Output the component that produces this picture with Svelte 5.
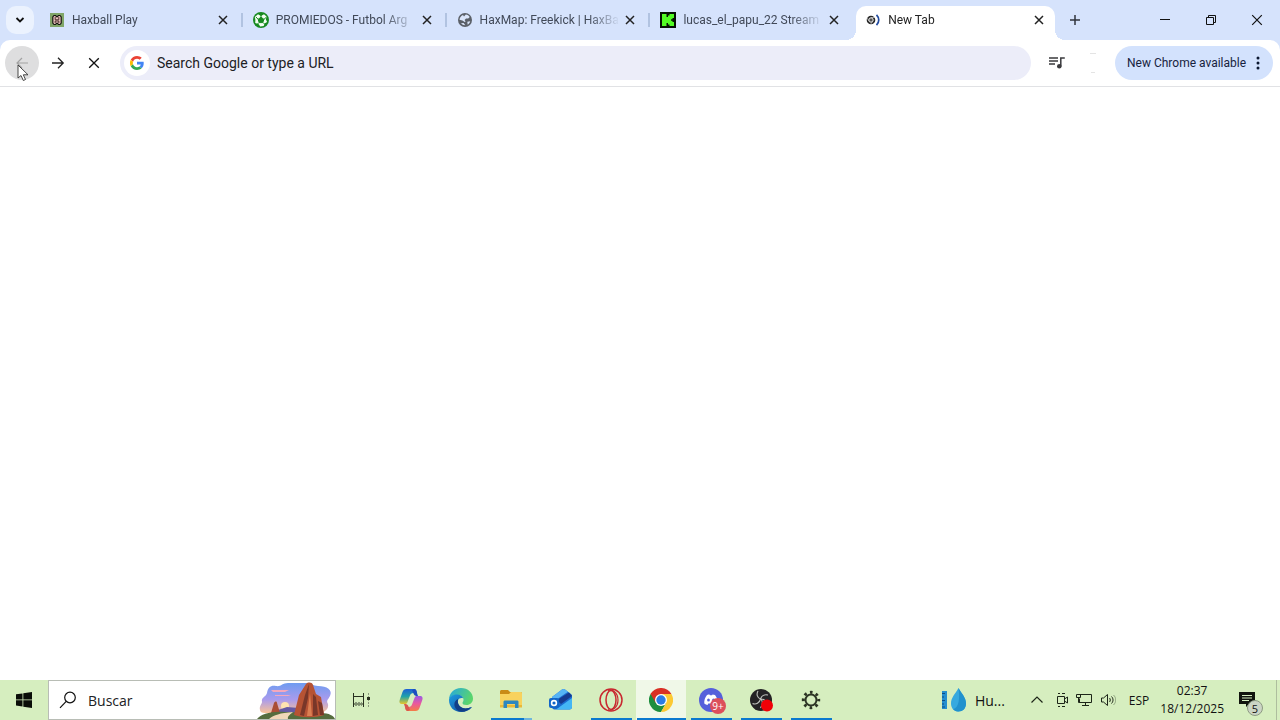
<script lang="ts">
    interface Tab {
        id: string;
        title: string;
    }

    const tabs: Tab[] = [
        { id: "haxball", title: "Haxball Play" },
        { id: "promiedos", title: "PROMIEDOS - Futbol Arg" },
        { id: "globe", title: "HaxMap: Freekick | HaxBa" },
        { id: "kick", title: "lucas_el_papu_22 Stream" },
        { id: "newtab", title: "New Tab" },
    ];

    const apps = [
        { id: "copilot", name: "Copilot", running: false },
        { id: "edge", name: "Microsoft Edge", running: false },
        { id: "files", name: "Explorador de archivos", running: true },
        { id: "outlook", name: "Outlook", running: false },
        { id: "opera", name: "Opera", running: true },
        { id: "chrome", name: "Google Chrome", running: true },
        { id: "discord", name: "Discord", running: true },
        { id: "obs", name: "OBS Studio", running: true },
        { id: "settings", name: "Configuración", running: true },
    ];

    let activeTab = $state("newtab");
    let activeApp = $state("chrome");
    let url = $state("");
    let search = $state("");
</script>

{#snippet cross(size: number, width: number)}
    <svg width={size} height={size} viewBox="0 0 10 10" fill="none" stroke="currentColor" stroke-width={width}>
        <path d="M1 1l8 8M9 1L1 9" />
    </svg>
{/snippet}

{#snippet favicon(id: string)}
    <svg class="favicon" viewBox="0 0 16 16">
        {#if id === "haxball"}
            <path d="M1 1h14v14H1z" fill="#7fa568" />
            <path d="M5 3.500h1.500L8 5l1.500-1.500H11l1.200 1.500v6L11 12.500H9.500L8 11l-1.500 1.500H5L3.800 11V5z" fill="#e9c3bd" stroke="#171512" stroke-width="1.200" />
            <path d="M6.200 5v2.800h3.600V5M6.200 11V9h3.600v2" fill="none" stroke="#3c2020" stroke-width=".9" />
        {:else if id === "promiedos"}
            <circle cx="8" cy="8" r="8" fill="#178a20" />
            <path d="M5 2.200L8 4l3-1.800 2.500 2.300-.6 3 1.200 2.500-2.600 1.500-.8 2.600-3.400.4L5.500 12 2.200 11l.2-3.200L1.800 5z" fill="#f4fff2" />
            <path d="M8 5.200l2.900 2.100-1.100 3.300H6.200L5.100 7.300zM3 5l2 2.200M8 2v3M13 5.500l-2 1.800M10 10.500l2 2M6 10.500l-2 2" fill="#178a20" stroke="#178a20" />
        {:else if id === "globe"}
            <circle cx="8" cy="8" r="7" fill="#5b6068" />
            <path d="M8.800 2.600c1.800.2 3 1 3.900 2.300l-1.500 1.700-2.200-.2-1.400 1.700 1 1.400-.9.600-2.300-1.500-2.900-.8c.2-2.200 1.500-4 3.500-4.800L7 4.600zM4 11.300l2.600-.3 1.700 2.300C6.300 13.300 5 12.600 4 11.300zM10.300 9.700l2.900-.4c-.4 1.700-1.300 2.700-2.500 3.400z" fill="#dbe6fb" />
        {:else if id === "kick"}
            <path d="M0 0h16v16H0z" fill="#061104" />
            <path d="M2 2h4.500v3H8V3.500h1.500V2H14v4h-1.500v1.200H11v1.600h1.500V10H14v4H9.500v-1.500H8V11H6.500v3H2z" fill="#52fb24" />
        {:else}
            <circle cx="6" cy="8" r="4.300" fill="#252525" />
            <circle cx="6" cy="8" r="2.200" fill="#555" stroke="#eee" />
            <path d="M6 5.500h4M4 9L2 6M7.500 9.500L5.800 12" stroke="#ddd" stroke-width=".6" />
            <path d="M11.500 2.800c3 3 3 7.400 0 10.400" fill="none" stroke="#214a9f" stroke-width="1.700" />
        {/if}
    </svg>
{/snippet}

{#snippet appIcon(id: string)}
    <svg width="24" height="24" viewBox="0 0 24 24">
        {#if id === "copilot"}
            <defs>
                <linearGradient id="cop-a" x1="0" y1="0" x2="0" y2="1">
                    <stop offset="0" stop-color="#1d5fd6" />
                    <stop offset=".5" stop-color="#1fa3a8" />
                    <stop offset="1" stop-color="#e9c52a" />
                </linearGradient>
                <linearGradient id="cop-b" x1="0" y1="0" x2="0" y2="1">
                    <stop offset="0" stop-color="#9a5ae4" />
                    <stop offset=".5" stop-color="#e9589e" />
                    <stop offset="1" stop-color="#f47c45" />
                </linearGradient>
            </defs>
            <path d="M7.500 1H15c2 0 2.500 1.500 3 4h-3.500c-2 0-3 1-3.500 2.500L8.500 14c-.5 1.500-1.200 2-2.500 2H3c-2.500 0-3-2-2.300-4L3.500 4c.7-2 1.800-3 4-3z" fill="url(#cop-a)" />
            <path d="M16.500 23H9c-2 0-2.500-1.500-3-4h3.500c2 0 3-1 3.500-2.500L15.500 10c.5-1.500 1.200-2 2.500-2h3c2.500 0 3 2 2.300 4l-2.800 8c-.7 2-1.800 3-4 3z" fill="url(#cop-b)" />
            <path d="M15 1c2 0 2.500 1.500 3 4l1 3h-1.500c-1.500 0-2.500-1-3-2.500L13 2z" fill="#1c4fc0" />
            <path d="M9 23c-2 0-2.500-1.500-3-4l-1-3h1.500c1.500 0 2.500 1 3 2.500L11 22z" fill="#d9574e" />
        {:else if id === "edge"}
            <defs>
                <linearGradient id="edge-a" x1="0" y1="0" x2="1" y2=".4">
                    <stop offset="0" stop-color="#25a7e2" />
                    <stop offset="1" stop-color="#5ad56c" />
                </linearGradient>
                <linearGradient id="edge-b" x1="0" y1="0" x2="1" y2="1">
                    <stop offset="0" stop-color="#1d9be0" />
                    <stop offset="1" stop-color="#114a9b" />
                </linearGradient>
            </defs>
            <path d="M0 12C0 5 5 0 12 0s12 5 12 10.500c0 4-3 6.500-6.500 6.500-3 0-4-1-4-2s1-1.500 1-3.300C14.500 9 12 7 8.500 7 4 7 0 9.500 0 12z" fill="url(#edge-a)" />
            <path d="M0 12c0-3 3.500-5.500 8-5.500 3 0 5.500 1.500 6.300 4-1.500-1-4.500-.5-5.300 2-1 4 3 8 7.500 8 2.500 0 4.500-.8 5.500-1.500.6-.3.900.2.500.8C20.500 22.500 16.500 24 12 24 5 24 0 19 0 12z" fill="url(#edge-b)" />
            <path d="M9 12.500c-1 4 3 8 7.500 8 2.500 0 4.500-.8 5.500-1.500-4 5.500-11 6-14.500 2.500C4 18 5 12.500 9 11z" fill="#123f87" />
        {:else if id === "files"}
            <path d="M1 3.500C1 2.700 1.700 2 2.500 2H9l2 2h10.500c.8 0 1.500.7 1.500 1.500V8H1z" fill="#c98b16" />
            <path d="M1 6h9l2-2h9.500c.8 0 1.500.7 1.500 1.500V18H1z" fill="#f8d25d" />
            <path d="M1 17h22v2.500H1z" fill="#e9b839" />
            <path d="M4.500 20v-6c0-1 .6-1.500 1.500-1.500h12c1 0 1.500.5 1.500 1.500v6H16v-4H8v4z" fill="#2d87bf" />
        {:else if id === "outlook"}
            <path d="M3 9L13 1.500c1-.7 2-.7 3 0L22 6c.7.500 1 1 1 2v11c0 1.500-1 2.500-2.500 2.500H5.500C4 21.500 3 20.500 3 19z" fill="#1b69ce" />
            <path d="M3 9L13 1.500c1-.7 2-.7 3 0l3 2.200L4 14z" fill="#56b4f5" />
            <path d="M8 12L20 4.500 23 8l-11 8z" fill="#173a8f" />
            <path d="M23 10v9c0 1.500-1 2.500-2.500 2.500H7z" fill="#44b6f5" />
            <rect x="0" y="10" width="10" height="10" rx="2" fill="#1266c8" />
            <circle cx="5" cy="15" r="2.400" fill="none" stroke="#fff" stroke-width="1.600" />
        {:else if id === "opera"}
            <circle cx="12" cy="12" r="11" fill="none" stroke="#c8272f" stroke-width="1.500" />
            <ellipse cx="12" cy="12" rx="5" ry="9.500" fill="none" stroke="#c8272f" stroke-width="1.500" />
            <path d="M9 2.500c4-2 10 2 10 9.500s-6 11.500-10 9.500" fill="none" stroke="#c8272f" stroke-width="1.200" />
        {:else if id === "chrome"}
            <path d="M12 12L1.600 6A12 12 0 0 1 22.400 6z" fill="#d93025" />
            <path d="M12 12v12A12 12 0 0 1 1.600 6z" fill="#1e8e3e" />
            <path d="M6.800 15L1.600 6l.8-1.200L12 6.200z" fill="#d93025" />
            <path d="M17.200 15L12 24l-1.500-.1L7 15z" fill="#1e8e3e" />
            <path d="M17.200 15L12 24A12 12 0 0 0 22.400 6H12z" fill="#fcc934" />
            <circle cx="12" cy="12" r="6" fill="#fff" />
            <circle cx="12" cy="12" r="4.700" fill="#2c7be5" />
        {:else if id === "discord"}
            <circle cx="12" cy="12" r="12" fill="#5560db" />
            <path d="M8 7c1-.5 2-.6 2.500-.6l.4.8h2.200l.4-.8c.8 0 1.800.2 2.500.6 2 2.500 3 5.500 2.700 8.500-1 .8-2.200 1.200-3.200 1.500l-.8-1.400H9.300L8.500 17c-1-.3-2.200-.7-3.200-1.500C5 12.500 6 9.500 8 7z" fill="#fff" />
            <ellipse cx="9.500" cy="12" rx="1.400" ry="1.600" fill="#5560db" />
            <ellipse cx="14.500" cy="12" rx="1.400" ry="1.600" fill="#5560db" />
        {:else if id === "obs"}
            <circle cx="12" cy="12" r="11" fill="#242225" />
            <path d="M9 3c-2 3.500-.5 7 2.500 8 3.500 0 6.500 2 6.500 5M11.500 11c-1 4-4.500 6-8 4.500M11.500 11c1-3 4-5 7.500-4M12 11c2 2.500 1.500 6-.5 9" fill="none" stroke="#bfc1bd" stroke-width="1.100" />
            <circle cx="18" cy="17.500" r="6" fill="#f00008" />
        {:else}
            <g fill="none" stroke="#2d3525">
                <circle cx="12" cy="12" r="5.500" stroke-width="2" />
                <circle cx="12" cy="12" r="7.700" stroke-width="3" stroke-dasharray="2.600 3.448" stroke-dashoffset="1.300" />
            </g>
        {/if}
    </svg>
{/snippet}

<div class="desktop">
    <header class="tabstrip">
        <button class="tab-search" aria-label="Search tabs">
            <svg width="10" height="10" viewBox="0 0 10 10" fill="none" stroke="#111" stroke-width="1.800"><path d="M1.500 3L5 6.500 8.500 3" /></svg>
        </button>
        <div class="tabs" role="tablist">
            {#each tabs as tab (tab.id)}
                <div class="tab" class:active={tab.id === activeTab}>
                    <button class="tab-main" role="tab" aria-selected={tab.id === activeTab} onclick={() => (activeTab = tab.id)}>
                        {@render favicon(tab.id)}
                        <span class="title">{tab.title}</span>
                    </button>
                    <button class="tab-close" aria-label="Close {tab.title}">{@render cross(10, 1.5)}</button>
                </div>
            {/each}
        </div>
        <button class="new-tab" aria-label="New tab">
            <svg width="12" height="12" viewBox="0 0 12 12" stroke="#30343c" stroke-width="1.500"><path d="M6 1v10M1 6h10" /></svg>
        </button>
        <div class="window-controls">
            <button aria-label="Minimize">
                <svg width="10" height="10" viewBox="0 0 10 10" stroke="#111"><path d="M0 4.500h10" /></svg>
            </button>
            <button aria-label="Restore">
                <svg width="10" height="10" viewBox="0 0 10 10" fill="none" stroke="#111"><path d="M.5 2.500h7v7h-7zM2.500 2.500v-2h7v7h-2" /></svg>
            </button>
            <button aria-label="Close window">{@render cross(12, 1)}</button>
        </div>
    </header>

    <div class="toolbar-back">
        <nav class="toolbar">
            <button class="round back" aria-label="Back">
                <svg width="14" height="14" viewBox="0 0 14 14" fill="none" stroke="#a2a2a2" stroke-width="1.200"><path d="M13 7H2M7 2L2 7l5 5" /></svg>
                <svg class="cursor" width="12" height="18" viewBox="0 0 12 18"><path d="M1 1v13l3-2.500 2.300 5 2.200-1-2.200-4.700H11z" fill="#fff" stroke="#333" stroke-width=".9" /></svg>
            </button>
            <button class="round" aria-label="Forward">
                <svg width="14" height="14" viewBox="0 0 14 14" fill="none" stroke="#222" stroke-width="1.300"><path d="M1 7h11M7 1.800L12.200 7 7 12.200" /></svg>
            </button>
            <button class="round" aria-label="Stop">{@render cross(12, 1.1)}</button>
            <label class="omnibox">
                <span class="google">
                    <svg width="14" height="14" viewBox="0 0 48 48">
                        <path fill="#ea4335" d="M24 9.500c3.500 0 6.700 1.200 9.200 3.600l6.900-6.900C35.900 2.400 30.500 0 24 0 14.600 0 6.500 5.400 2.600 13.200l8 6.200C12.400 13.700 17.700 9.500 24 9.500z" />
                        <path fill="#4285f4" d="M47 24.600c0-1.600-.2-3.100-.4-4.600H24v9h12.900c-.6 3-2.200 5.500-4.700 7.200l7.700 6C44.400 38 47 31.800 47 24.600z" />
                        <path fill="#fbbc05" d="M10.500 28.600a14.500 14.500 0 0 1 0-9.200l-8-6.200a24 24 0 0 0 0 21.600z" />
                        <path fill="#34a853" d="M24 48c6.500 0 11.900-2.100 15.900-5.800l-7.700-6c-2.200 1.500-4.900 2.300-8.200 2.300-6.300 0-11.600-4.200-13.500-9.900l-8 6.200C6.500 42.600 14.600 48 24 48z" />
                    </svg>
                </span>
                <input type="text" aria-label="Address" placeholder="Search Google or type a URL" bind:value={url} />
            </label>
            <button class="round" aria-label="Media controls">
                <svg width="16" height="14" viewBox="0 0 16 14" fill="none" stroke="#3a3a3d" stroke-width="1.500">
                    <path d="M0 2h9M0 5h9M0 8h6M11.800 10V2h4" />
                    <circle cx="10.300" cy="10.300" r="2.300" fill="#3a3a3d" stroke="none" />
                </svg>
            </button>
            <button class="round" aria-label="Profile">
                <svg width="6" height="20" viewBox="0 0 6 20" stroke="#e4e4e4"><path d="M0 .5h6M1 19.500h4" /></svg>
            </button>
            <button class="update">
                <span>New Chrome available</span>
                <svg width="4" height="16" viewBox="0 0 4 16" fill="#0b1730"><circle cx="2" cy="3" r="1.500" /><circle cx="2" cy="8" r="1.500" /><circle cx="2" cy="13" r="1.500" /></svg>
            </button>
        </nav>
    </div>

    <main></main>

    <footer class="taskbar">
        <button class="start" aria-label="Inicio">
            <svg width="16" height="16" viewBox="0 0 16 16" fill="#0a0d08"><path d="M0 2.300l6.500-.9v6.100H0zM7.300 1.300L16 0v7.500H7.300zM0 8.300h6.500v6.200L0 13.600zM7.300 8.300H16V16l-8.700-1.300z" /></svg>
        </button>
        <label class="search">
            <svg width="18" height="18" viewBox="0 0 18 18" fill="none" stroke="#111" stroke-width="1.200"><circle cx="11" cy="6.500" r="5.300" /><path d="M7.200 10.300L1 16.800" /></svg>
            <input type="text" aria-label="Buscar" placeholder="Buscar" bind:value={search} />
            <svg class="scene" width="78" height="37" viewBox="0 0 78 37">
                <defs>
                    <linearGradient id="sky" x1="0" y1="0" x2="0" y2="1">
                        <stop offset="0" stop-color="#6f9cf0" />
                        <stop offset=".55" stop-color="#a99bed" />
                        <stop offset="1" stop-color="#f9c296" />
                    </linearGradient>
                </defs>
                <path d="M3 28C2 24 5 22 5 20c-1-5 4-5 5-9 1-6 4-8 9-7 5 1 6-3 12-3h18c5 0 7 3 12 3 9 0 15 4 12 10-2 4-4 4-2 8 1 5-3 8-8 9H8c-3 0-5-1-5-3z" fill="url(#sky)" />
                <path d="M14 8h18l-4 2H16zM18 13h16l-3 1H18z" fill="#f4a7bd" />
                <circle cx="28" cy="24" r="4" fill="#ffe4b0" />
                <path d="M18 29l12-4 12 1 6 5H18z" fill="#6559a3" />
                <path d="M14 31l3-10c1-2 3-2 3 0l3 10z" fill="#a94e35" />
                <path d="M0 37c4-5 14-8 28-7l36 1c8 0 13 3 14 6z" fill="#556d3e" />
                <path d="M12 37c5-4 11-6 24-7-2 2-6 4-5 7z" fill="#f0d7b8" />
                <path d="M37 33l5-20 7-11c2-2 6-2 7 1l3 9 5 3 3 18c-9 3-21 3-30 0z" fill="#b65334" />
                <path d="M43 33l5-20 4-11-1 14-4 18zM56 34V12l3 3 2 18zM63 33l-2-14 4 2 2 12z" fill="#793729" />
                <path d="M50 34l3-23 2 23z" fill="#dc8053" />
            </svg>
        </label>
        <button class="task-view" aria-label="Vista de tareas">
            <svg width="18" height="16" viewBox="0 0 18 16" fill="none" stroke="#27301f">
                <path d="M1.500 1v3.500h10V1M1.500 15v-3h10v3M1.500 4v8M11.500 4v8" />
                <path d="M3 10.500h7M3 13.500h7M16.500 1v14" stroke="#8b9a7d" stroke-dasharray="2 1" />
                <path d="M15 6.500h3" stroke-width="3" />
            </svg>
        </button>
        <div class="apps">
            {#each apps as app (app.id)}
                <button
                    class="app"
                    class:running={app.running}
                    class:current={app.id === activeApp}
                    class:stacked={app.id === "files"}
                    aria-label={app.name}
                    onclick={() => (activeApp = app.id)}
                >
                    {@render appIcon(app.id)}
                    {#if app.id === "discord"}
                        <span class="count">9+</span>
                    {/if}
                </button>
            {/each}
        </div>

        <button class="weather">
            <svg width="26" height="24" viewBox="0 0 26 24">
                <path d="M1 3h5v18H1z" fill="#258fcf" />
                <path d="M1 5.500h3M1 9h2M1 12.500h3M1 16h2M1 19h3" stroke="#0b4d87" />
                <path d="M17.500 0c3 5.500 7.500 9.500 7.500 15.500 0 5-3.300 8-7.500 8s-7.500-3-7.500-8C10 9.500 14.500 5.500 17.500 0z" fill="#36a9df" />
                <path d="M17.500 0c3 5.500 7.500 9.500 7.500 15.500 0 5-3.300 8-7.500 8-2 0-4-.8-5.300-2.300C18 20 19 10 17.500 0z" fill="#2191cd" />
            </svg>
            <span>Hu...</span>
        </button>
        <div class="tray">
            <button aria-label="Mostrar iconos ocultos">
                <svg width="12" height="16" viewBox="0 0 12 16" fill="none" stroke="#1d2518" stroke-width="1.200"><path d="M.5 10.500L6 5l5.500 5.500" /></svg>
            </button>
            <button aria-label="Reunirse ahora">
                <svg width="12" height="16" viewBox="0 0 12 16" fill="none" stroke="#1d2518"><path d="M1.500 4.500h7v7h-7zM8.500 7l3-2v6l-3-2M2 1.500h2M6 1.500h3M2 14.500h2M6 14.500h3" /></svg>
            </button>
            <button aria-label="Red">
                <svg width="18" height="16" viewBox="0 0 18 16" fill="none" stroke="#1d2518"><path d="M4.500 2.500h12v8h-12v-4M10.500 10.500v3M7 13.500h7M1.500 2.500h4v3h-4zM3.500 5.500v5H5" /></svg>
            </button>
            <button aria-label="Volumen">
                <svg width="16" height="16" viewBox="0 0 16 16" fill="none" stroke="#1d2518"><path d="M1.500 6h2l4-3.500v11L3.500 10h-2zM9.500 6c1 1 1 3 0 4M11.500 4.500c2 2 2 5 0 7" /><path d="M13.500 3c3 3 3 7 0 10" stroke="#8fa37f" /></svg>
            </button>
        </div>
        <button class="lang">ESP</button>
        <button class="clock">
            <span>02:37</span>
            <span>18/12/2025</span>
        </button>
        <button class="notify" aria-label="5 notificaciones nuevas">
            <svg width="16" height="16" viewBox="0 0 16 16"><path d="M0 0h16v12h-6l-3 3v-3H0z" fill="#11150e" /><path d="M3 3.500h10M3 6h10M3 8.500h7" stroke="#d6eec0" /></svg>
            <span class="badge">5</span>
        </button>
        <div class="peek"></div>
    </footer>
</div>

<style>
    :global(body) {
        margin: 0;
    }
    .desktop {
        display: flex;
        flex-direction: column;
        min-height: 100vh;
        background: #fff;
        color: #111;
        font-family: "Open Sans", "Noto Sans", sans-serif;
        font-size: 12px;
    }
    button,
    input {
        margin: 0;
        padding: 0;
        border: 0;
        background: none;
        color: inherit;
        font: inherit;
    }
    button {
        display: flex;
        align-items: center;
        justify-content: center;
        flex-shrink: 0;
    }
    input {
        flex: 1;
        min-width: 0;
        outline: none;
    }
    svg {
        flex-shrink: 0;
    }
    .tabstrip,
    .toolbar {
        font-family: Roboto, "Noto Sans", sans-serif;
    }
    .tabstrip {
        display: flex;
        height: 40px;
        background: #d6e3fc;
    }
    .tab-search {
        width: 28px;
        height: 28px;
        margin: 6px 4px 0 6px;
        border-radius: 10px;
        background: #ebf2fe;
    }
    .tabs {
        display: flex;
        flex: 0 1 1020px;
        min-width: 0;
    }
    .tab {
        position: relative;
        display: flex;
        align-items: center;
        flex: 1;
        min-width: 0;
        box-sizing: border-box;
        padding: 0 10px 0 11px;
        color: #414958;
    }
    .tab:not(.active):not(:nth-last-child(2))::after {
        content: "";
        position: absolute;
        right: -1px;
        top: 13px;
        width: 2px;
        height: 14px;
        background: #b1c3e1;
    }
    .tab.active {
        margin: 6px 3px 0;
        padding: 0 7px 6px 9px;
        border-radius: 10px 10px 0 0;
        background: #fff;
        color: #222;
    }
    .tab.active::before,
    .tab.active::after {
        content: "";
        position: absolute;
        bottom: 0;
        width: 10px;
        height: 10px;
    }
    .tab.active::before {
        left: -10px;
        background: radial-gradient(circle at 0 0, transparent 10px, #fff 10px);
    }
    .tab.active::after {
        right: -10px;
        background: radial-gradient(circle at 100% 0, transparent 10px, #fff 10px);
    }
    .tab-main {
        flex: 1;
        justify-content: flex-start;
        gap: 7px;
        min-width: 0;
    }
    .favicon {
        width: 16px;
        height: 16px;
    }
    .title {
        flex: 1;
        overflow: hidden;
        text-align: left;
        white-space: nowrap;
        mask-image: linear-gradient(to right, #000 108px, transparent 140px);
    }
    .tab-close {
        width: 18px;
        height: 18px;
        color: #222;
    }
    .new-tab {
        width: 28px;
        margin-left: 3px;
    }
    .window-controls {
        display: flex;
        margin-left: auto;
    }
    .window-controls button {
        width: 46px;
    }
    .toolbar-back {
        background: #d6e3fc;
    }
    .toolbar {
        display: flex;
        align-items: center;
        gap: 2px;
        padding: 6px 7px 6px 5px;
        border-bottom: 1px solid #e1e2e5;
        border-radius: 10px 10px 0 0;
        background: #fff;
    }
    .round {
        width: 34px;
        height: 34px;
        border-radius: 50%;
    }
    .back {
        position: relative;
        background: #dededf;
    }
    .cursor {
        position: absolute;
        left: 12px;
        top: 18px;
    }
    .omnibox {
        display: flex;
        align-items: center;
        flex: 1;
        gap: 7px;
        height: 34px;
        box-sizing: border-box;
        margin: 0 7px;
        padding: 0 16px 0 4px;
        border-radius: 17px;
        background: #ecedf9;
        font-size: 14px;
    }
    .google {
        display: flex;
        align-items: center;
        justify-content: center;
        width: 26px;
        height: 26px;
        border-radius: 50%;
        background: #fff;
    }
    input::placeholder {
        color: #202124;
        opacity: 1;
    }
    .update {
        justify-content: space-between;
        width: 158px;
        height: 34px;
        margin-left: 3px;
        box-sizing: border-box;
        padding: 0 13px 0 12px;
        border-radius: 17px;
        background: #d3e2fd;
        color: #17223d;
        white-space: nowrap;
    }
    main {
        flex: 1;
    }
    .taskbar {
        display: flex;
        align-items: stretch;
        height: 40px;
        background: #d6eebf;
    }
    .start {
        width: 48px;
    }
    .search {
        display: flex;
        align-items: center;
        gap: 11px;
        width: 288px;
        box-sizing: border-box;
        padding-left: 10px;
        border: 1px solid #b8bdb5;
        background: #fff;
        font-size: 14px;
    }
    .scene {
        align-self: flex-end;
    }
    .task-view {
        width: 50px;
    }
    .apps {
        display: flex;
    }
    .app {
        position: relative;
        width: 50px;
    }
    .running::after {
        content: "";
        position: absolute;
        right: 4px;
        bottom: 0;
        left: 5px;
        height: 2px;
        background: #0b79cf;
    }
    .stacked::after {
        background: linear-gradient(to right, #0b79cf 33px, #6fb6dd 33px);
    }
    .current {
        background: #f0f8e8;
    }
    .current::after {
        right: 0;
        left: 1px;
    }
    .count,
    .badge {
        position: absolute;
        display: flex;
        align-items: center;
        justify-content: center;
        border-radius: 50%;
    }
    .count {
        right: 10px;
        bottom: 6px;
        width: 16px;
        height: 16px;
        background: #dc4f5b;
        color: #fff;
        font-size: 10px;
    }
    .weather {
        gap: 8px;
        margin-left: auto;
        font-size: 14px;
    }
    .tray {
        display: flex;
        gap: 7px;
        margin-left: 26px;
    }
    .tray button:first-child {
        margin-right: 6px;
    }
    .lang {
        margin-left: 13px;
    }
    .clock {
        flex-direction: column;
        margin-left: 11px;
        line-height: 18px;
    }
    .notify {
        position: relative;
        width: 16px;
        margin: 0 21px 0 15px;
    }
    .badge {
        right: -8px;
        bottom: 4px;
        width: 16px;
        height: 16px;
        border: 1px solid #8d9a83;
        box-sizing: border-box;
        background: #ccd5c5;
        font-size: 11px;
    }
    .peek {
        width: 4px;
        border-left: 1px solid #aebe9e;
        box-sizing: border-box;
    }
</style>
